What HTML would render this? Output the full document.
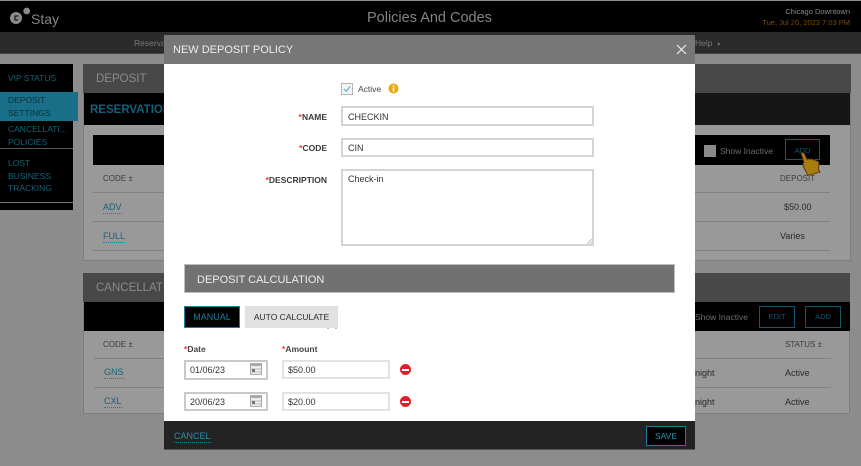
<!DOCTYPE html>
<html>
<head>
<meta charset="utf-8">
<style>
html,body{margin:0;padding:0;width:861px;height:466px;overflow:hidden;background:#8c8c8c;font-family:"Liberation Sans",sans-serif;}
#w{position:absolute;left:0;top:0;width:861px;height:466px;overflow:hidden;filter:blur(0.35px);}
.a{position:absolute;white-space:nowrap;}
.b{position:absolute;box-sizing:border-box;}
.t{color:#1a6177;}
.u{border-bottom:1px dotted #1c7f9c;line-height:11px;}
.l{position:absolute;height:1px;background:#808080;}
.g{color:#2a2a2a;font-size:9px;}
.h{color:#3d3d3d;font-size:8px;}
.inp{position:absolute;box-sizing:border-box;background:#fff;border:2px solid #d4d4d4;font-size:9px;color:#333;padding-left:5px;}
.lbl{position:absolute;font-size:8.5px;color:#3a3a3a;font-weight:bold;white-space:nowrap;}
.lbl i{color:#e33;font-style:normal;}
.m{position:absolute;width:11px;height:11px;border-radius:50%;background:#d8232a;}
.m:after{content:"";position:absolute;left:2px;top:4.5px;width:7px;height:2px;background:#fff;}
</style>
</head>
<body>
<div id="w">
<div class="b" style="left:0;top:0;width:861px;height:1px;background:#8c8c8c"></div>
<div class="b" style="left:0;top:1px;width:861px;height:31px;background:#000"></div>
<div class="b" style="left:0;top:32px;width:861px;height:22px;background:#2b2b2b;border-bottom:1px solid #444"></div>

<svg class="b" style="left:8px;top:6px" width="26" height="22" viewBox="0 0 26 22">
<circle cx="8" cy="12" r="6" fill="#8a8a8a"/>
<path d="M10.5 10H7V14H10" fill="none" stroke="#000" stroke-width="1"/>
<circle cx="18.7" cy="5" r="3.4" fill="#8a8a8a"/>
</svg>
<div class="a" style="left:31px;top:11px;font-size:14px;color:#858585;line-height:16px">Stay</div>
<div class="a" style="left:367px;top:9px;font-size:14.5px;color:#848484;line-height:18px">Policies And Codes</div>
<div class="a" style="right:11px;top:7px;font-size:7.5px;color:#8a8a8a;line-height:9px">Chicago Downtown</div>
<div class="a" style="right:11px;top:18px;font-size:7.5px;color:#7c4a00;line-height:9px">Tue, Jul 20, 2023 7:03 PM</div>
<div class="a" style="left:134px;top:38px;font-size:8.5px;color:#777;line-height:10px">Reservations</div>
<div class="a" style="left:695px;top:38px;font-size:8.5px;color:#777;line-height:10px">Help &nbsp;<span style="font-size:6px">▾</span></div>

<!-- sidebar -->
<div class="b" style="left:0;top:64px;width:73px;height:146px;background:#000"></div>
<div class="b" style="left:0;top:92px;width:78px;height:29px;background:#1a6f88"></div>
<div class="b" style="left:0;top:148px;width:73px;height:1px;background:#555"></div>
<div class="b" style="left:0;top:202px;width:73px;height:1px;background:#777"></div>
<div class="a t" style="left:8px;top:73px;font-size:8.5px;line-height:11px">VIP STATUS</div>
<div class="a" style="left:8px;top:94px;font-size:8.5px;line-height:13px;color:#0b2f3b">DEPOSIT<br>SETTINGS</div>
<div class="a t" style="left:8px;top:122.5px;font-size:8.5px;line-height:13px">CANCELLATI...<br>POLICIES</div>
<div class="a t" style="left:8px;top:157px;font-size:8.5px;line-height:12.5px">LOST<br>BUSINESS<br>TRACKING</div>

<!-- deposit panel -->
<div class="b" style="left:83px;top:64px;width:768px;height:197px;background:#999;border:1px solid #7d7d7d"></div>
<div class="b" style="left:83px;top:64px;width:768px;height:29px;background:#484848"></div>
<div class="b" style="left:84px;top:93px;width:766px;height:32px;background:#161616"></div>
<div class="b" style="left:84px;top:93px;width:80px;height:32px;background:#000"></div>
<div class="a" style="left:96px;top:72px;font-size:11.5px;color:#8a8a8a;line-height:14px">DEPOSIT</div>
<div class="a" style="left:90px;top:103px;font-size:11.5px;font-weight:bold;color:#15607a;line-height:14px">RESERVATION</div>
<div class="b" style="left:93px;top:135px;width:737px;height:30px;background:#000"></div>
<div class="a h" style="left:103px;top:174px;line-height:10px">CODE ±</div>
<div class="a h" style="left:780px;top:174px;line-height:10px">DEPOSIT</div>
<div class="l" style="left:93px;top:192px;width:737px"></div>
<div class="l" style="left:93px;top:221px;width:737px"></div>
<div class="l" style="left:93px;top:250px;width:737px"></div>
<div class="a t u" style="left:103px;top:202px;font-size:9px">ADV</div>
<div class="a t u" style="left:103px;top:231px;font-size:9px">FULL</div>
<div class="a g" style="left:784px;top:202px;line-height:11px">$50.00</div>
<div class="a g" style="left:780px;top:231px;line-height:11px">Varies</div>
<div class="b" style="left:704px;top:145px;width:12px;height:12px;background:#8a8a8a"></div>
<div class="a" style="left:720px;top:146px;font-size:8.5px;color:#6d6d6d;line-height:11px">Show Inactive</div>
<div class="b" style="left:785px;top:139px;width:35px;height:21px;border:1px solid #14566a;color:#14566a;font-size:7.5px;text-align:center;line-height:21px">ADD</div>

<!-- cancellation panel -->
<div class="b" style="left:83px;top:273px;width:767px;height:141px;background:#999;border:1px solid #7d7d7d"></div>
<div class="b" style="left:83px;top:273px;width:767px;height:29px;background:#484848"></div>
<div class="b" style="left:84px;top:302px;width:766px;height:29px;background:#000"></div>
<div class="a" style="left:96px;top:281px;font-size:11.5px;color:#8a8a8a;line-height:14px">CANCELLATION</div>
<div class="a h" style="left:103px;top:340px;line-height:10px">CODE ±</div>
<div class="a h" style="left:785px;top:340px;line-height:10px">STATUS ±</div>
<div class="l" style="left:94px;top:358px;width:737px"></div>
<div class="l" style="left:94px;top:387px;width:737px"></div>
<div class="a t u" style="left:104px;top:367px;font-size:9px">GNS</div>
<div class="a t u" style="left:104px;top:396px;font-size:9px">CXL</div>
<div class="a g" style="left:695px;top:368px;line-height:11px">night</div>
<div class="a g" style="left:695px;top:397px;line-height:11px">night</div>
<div class="a g" style="left:785px;top:368px;line-height:11px">Active</div>
<div class="a g" style="left:785px;top:397px;line-height:11px">Active</div>
<div class="a" style="left:695px;top:312px;font-size:8.5px;color:#6d6d6d;line-height:11px">Show Inactive</div>
<div class="b" style="left:759px;top:306px;width:36px;height:22px;border:1px solid #14566a;color:#14566a;font-size:7.5px;text-align:center;line-height:20px">EDIT</div>
<div class="b" style="left:805px;top:306px;width:36px;height:22px;border:1px solid #14566a;color:#14566a;font-size:7.5px;text-align:center;line-height:20px">ADD</div>

<!-- hand cursor -->
<svg class="b" style="left:798px;top:151px" width="26" height="26" viewBox="0 0 26 26">
<path d="M3 2.5C4 1 6 1.5 6.5 3L9 8.5C10 7.5 11.5 7.5 12 8.5C13 7.5 14.5 7.8 15 9C16 8.3 17.5 8.5 18 10C19.5 9.5 21 10.5 21 12.5L20.5 18.5L22 21L9.5 24.5L8.5 21.5C6.5 18 4.5 15 5 12L6 11.5Z" fill="#a97c10" stroke="#4a3505" stroke-width="0.9"/>
</svg>

<!-- modal -->
<div class="b" style="left:164px;top:35px;width:531px;height:29px;background:#777"></div>
<div class="a" style="left:173px;top:43px;font-size:11px;color:#ededed;line-height:14px">NEW DEPOSIT POLICY</div>
<svg class="b" style="left:676px;top:44px" width="11" height="11" viewBox="0 0 11 11"><path d="M1 1L10 10M10 1L1 10" stroke="#eee" stroke-width="1.2"/></svg>
<div class="b" style="left:164px;top:64px;width:531px;height:357px;background:#fff"></div>
<div class="b" style="left:164px;top:421px;width:531px;height:29px;background:#232323;border-bottom:1px solid #555"></div>

<div class="b" style="left:341px;top:83px;width:12px;height:12px;border:1px solid #b5b5b5;background:#f4f4f4"></div>
<svg class="b" style="left:342px;top:84px" width="10" height="10" viewBox="0 0 10 10"><path d="M2 5L4.2 7.4L8 2.5" fill="none" stroke="#57b6d6" stroke-width="1.2"/></svg>
<div class="a" style="left:358px;top:84px;font-size:8.5px;color:#444;line-height:11px">Active</div>
<svg class="b" style="left:388px;top:83px" width="11" height="11" viewBox="0 0 11 11"><circle cx="5.5" cy="5.5" r="5" fill="#eaa70e"/><rect x="4.7" y="4.6" width="1.7" height="4" fill="#fff"/><rect x="4.7" y="2.3" width="1.7" height="1.5" fill="#fff"/></svg>

<div class="lbl" style="right:534px;top:112px;line-height:10px"><i>*</i>NAME</div>
<div class="lbl" style="right:534px;top:143px;line-height:10px"><i>*</i>CODE</div>
<div class="lbl" style="right:534px;top:175px;line-height:10px"><i>*</i>DESCRIPTION</div>
<div class="inp" style="left:341px;top:106px;width:253px;height:20px;line-height:18px">CHECKIN</div>
<div class="inp" style="left:341px;top:138px;width:253px;height:19px;line-height:17px">CIN</div>
<div class="inp" style="left:341px;top:169px;width:253px;height:77px;line-height:17px">Check-in</div>
<svg class="b" style="left:586px;top:238px" width="7" height="7" viewBox="0 0 7 7"><path d="M1 6L6 1M4 6L6 4" stroke="#aaa" stroke-width="0.8"/></svg>

<div class="b" style="left:184px;top:264px;width:491px;height:29px;background:#717171;border:1px solid #bdbdbd"></div>
<div class="a" style="left:197px;top:273px;font-size:11px;color:#ececec;line-height:14px">DEPOSIT CALCULATION</div>

<div class="b" style="left:184px;top:306px;width:56px;height:22px;background:#000;border:1px solid #1f7f9e;color:#1f7f9c;font-size:9px;text-align:center;line-height:20px">MANUAL</div>
<div class="b" style="left:245px;top:306px;width:93px;height:22px;background:#e1e1e1;color:#2c2c2c;font-size:8.5px;text-align:center;line-height:22px">AUTO CALCULATE</div>
<div class="b" style="left:327px;top:328px;width:2px;height:1px;background:#bbb"></div>
<div class="b" style="left:335px;top:328px;width:2px;height:1px;background:#bbb"></div>

<div class="lbl" style="left:184px;top:344px;line-height:10px;color:#444"><i>*</i>Date</div>
<div class="lbl" style="left:282px;top:344px;line-height:10px;color:#444"><i>*</i>Amount</div>

<div class="inp" style="left:184px;top:360px;width:84px;height:20px;line-height:17px;border-color:#c9c9c9;padding-left:4px">01/06/23</div>
<div class="inp" style="left:282px;top:360px;width:108px;height:19px;line-height:16px;border-color:#e2e2e2;padding-left:4px">$50.00</div>
<div class="inp" style="left:184px;top:392px;width:84px;height:19px;line-height:16px;border-color:#c9c9c9;padding-left:4px">20/06/23</div>
<div class="inp" style="left:282px;top:392px;width:108px;height:19px;line-height:16px;border-color:#e2e2e2;padding-left:4px">$20.00</div>

<svg class="b" style="left:250px;top:363px" width="12" height="12" viewBox="0 0 12 12"><rect x="0.5" y="0.5" width="11" height="11" fill="#eee" stroke="#aaa"/><rect x="0.5" y="0.5" width="11" height="2.5" fill="#aaa"/><path d="M1 6H11M1 9H11" stroke="#bbb"/><rect x="2" y="6" width="3" height="3" fill="#777"/></svg>
<svg class="b" style="left:250px;top:395px" width="12" height="12" viewBox="0 0 12 12"><rect x="0.5" y="0.5" width="11" height="11" fill="#eee" stroke="#aaa"/><rect x="0.5" y="0.5" width="11" height="2.5" fill="#aaa"/><path d="M1 6H11M1 9H11" stroke="#bbb"/><rect x="2" y="6" width="3" height="3" fill="#777"/></svg>
<div class="m" style="left:400px;top:364px"></div>
<div class="m" style="left:400px;top:396px"></div>

<div class="a u" style="left:174px;top:431px;font-size:9px;color:#2a8eab">CANCEL</div>
<div class="b" style="left:646px;top:426px;width:40px;height:20px;background:#000;border:1px solid #1b7a96;color:#2a8eab;font-size:8.5px;text-align:center;line-height:18px">SAVE</div>
</div>
</body>
</html>
